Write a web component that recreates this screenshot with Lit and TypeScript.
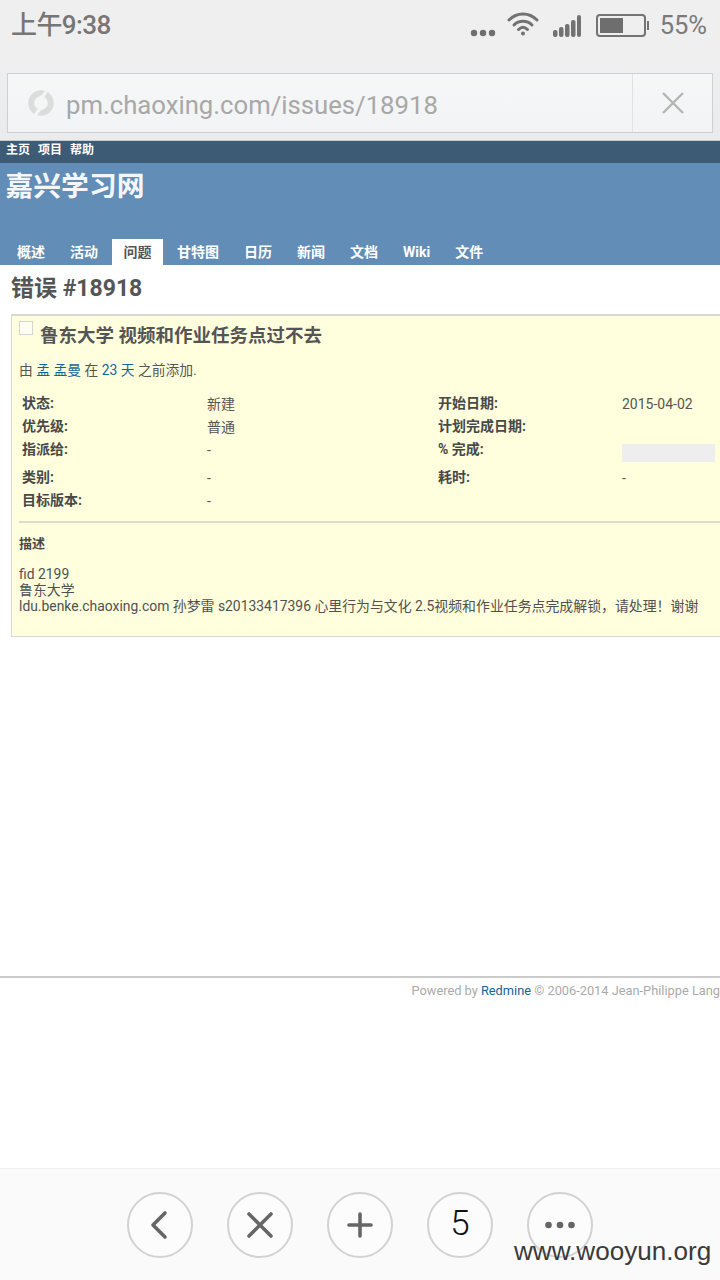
import { LitElement, html, css } from "lit";
import { customElement } from "lit/decorators.js";

@customElement("app-root")
export class AppRoot extends LitElement {
  static styles = css`
    :host { display: block; width: 720px; height: 1280px; overflow: hidden; position: relative; background: #fff;
      font-family: Roboto, "Noto Sans CJK SC", sans-serif; color: #484848; }
    a { color: #169; text-decoration: none; }
    .page { display: flex; flex-direction: column; height: 1280px; }
    .chrome { height: 140px; background: linear-gradient(#efefef 40%, #e9ebed); display: flex; flex-direction: column; box-sizing: border-box; flex: none; }
    .status { height: 50px; display: flex; align-items: center; padding: 0 13px 0 12px; color: #737373; flex: none; }
    .time { font-size: 26px; font-weight: 500; letter-spacing: -0.6px; color: #767676; margin: -6px 0 0 -1px; }
    .status-right { margin-left: auto; display: flex; align-items: center; }
    .pct { font-size: 25.500px; color: #7a7a7a; margin-left: 10px; }
    .urlbox { margin: 23px 7px 0; height: 60px; box-sizing: border-box; border: 1px solid #cdd0d4; display: flex; align-items: center; background: linear-gradient(#f6f7f7, #f2f3f4); }
    .url { font-size: 25.700px; color: #a8a8a8; margin: 3px 0 0 12px; }
    .logo { margin-left: 20px; display: block; }
    .close { margin-left: auto; width: 79px; height: 58px; border-left: 1px solid #e0e2e4; display: flex; align-items: center; justify-content: center; }
    .top { height: 23px; background: #3e5b76; border-top: 1px solid #c8cacc; box-sizing: border-box; display: flex; gap: 8px; padding: 0 6px; align-items: center; font-size: 12px; font-weight: 700; color: #fff; flex: none; }
    .top span { line-height: 16px; margin-top: -4px; }
    .header { height: 102px; background: #628db6; display: flex; flex-direction: column; flex: none; box-sizing: border-box; }
    .site { font-size: 27.800px; font-weight: 700; color: #f4f6f9; line-height: 36px; padding: 6px 0 0 5.500px; }
    .tabs { margin-top: auto; display: flex; padding-left: 4.500px; height: 26px; }
    .tab { font-size: 14px; font-weight: 700; color: #fff; padding: 0 12.500px 3px; display: flex; align-items: center; box-sizing: border-box; }
    .tab.on { background: #fff; color: #555; width: 51px; justify-content: center; margin: 0 1.500px; padding: 0 0 3px; }
    .tab.latin { padding-bottom: 0; }
    .main { flex: 1; display: flex; flex-direction: column; }
    h2 { margin: 0; font-size: 23px; font-weight: 700; color: #555; line-height: 30px; padding: 9px 0 0 11px; }
    .issue { margin: 10px 0 0 11px; width: 720px; height: 323px; box-sizing: border-box; background: #ffd; border: 1px solid #d7d7d7; border-top-width: 2px; padding: 5px 0 0 7px; }
    .title { display: flex; align-items: flex-start; }
    .check { width: 14px; height: 14px; border: 1px solid #d5d5d5; background: #fdfdf2; box-sizing: border-box; flex: none; }
    .title h3 { margin: 1px 0 0 7px; font-size: 18.500px; font-weight: 700; color: #555; line-height: 28px; }
    .author { font-size: 13.800px; color: #555; margin: 10px 0 0 0; line-height: 20px; }
    .attrs { display: grid; grid-template-columns: 185px 231px 184px 100px; grid-template-rows: 23px 23px 28px 23px 23px; margin: 13px 0 0 3px; font-size: 14px; }
    .attrs .l { font-weight: 700; color: #484848; line-height: 20px; }
    .attrs .v { color: #555; line-height: 22px; }
    .bar { width: 93px; height: 18px; background: #eee; margin-top: 5px; }
    hr { border: 0; border-top: 2px solid #dcdcc8; margin: 0; }
    .desc { margin-top: 8px; }
    .desc-h { font-size: 13px; font-weight: 700; color: #484848; margin-top: 12px; line-height: 18px; }
    .body { font-size: 13.900px; color: #505050; line-height: 16px; margin-top: 13px; white-space: nowrap; }
    .spacer { flex: 1; }
    .footer { border-top: 2px solid #ccc; height: 192px; box-sizing: border-box; flex: none; }
    .foot { text-align: right; font-size: 12.800px; color: #aaa; line-height: 26px; white-space: nowrap; }
    .bottom { height: 112px; box-sizing: border-box; background: #fafafa; border-top: 1px solid #eee; display: flex; gap: 34px; padding: 23px 0 0 127px; flex: none; }
    .circle { width: 66px; height: 66px; border-radius: 50%; border: 2px solid #d2d2d2; box-sizing: border-box; display: flex; align-items: center; justify-content: center; background: #fcfcfc; }
    .num { color: #111; font-size: 35px; font-weight: 300; margin-top: -4px; }
    .mark { position: absolute; left: 514px; top: 1235px; font-size: 26.100px; line-height: 32px; color: #3a3a3a; white-space: nowrap; font-family: "Liberation Sans", Arial, sans-serif; }
  `;

  render() {
    return html`<div class="page">
      <div class="chrome">
        <div class="status">
          <span class="time">上午9:38</span>
          <div class="status-right">
            <svg width="26" height="8" viewBox="0 0 26 8" style="margin-top:15px"><g fill="#6f6f6f"><circle cx="4" cy="4" r="3.200"/><circle cx="13" cy="4" r="3.200"/><circle cx="22" cy="4" r="3.200"/></g></svg>
            <svg width="32" height="24" viewBox="0 0 32 24" style="margin:-2px 0 0 11px" fill="none" stroke="#727272" stroke-width="3" stroke-linecap="round"><path d="M2 8C10 0 22 0 30 8"/><path d="M7 13c5-5 13-5 18 0"/><path d="M11.500 17.500c3-3 6-3 9 0"/><circle cx="16" cy="21.500" r="2" fill="#727272" stroke="none"/></svg>
            <svg width="28" height="22" viewBox="0 0 28 22" style="margin:1px 0 0 14px" fill="#727272"><rect x="0" y="15" width="4.500" height="7" rx="2"/><rect x="6" y="12" width="4.500" height="10" rx="2"/><rect x="12" y="9" width="4.500" height="13" rx="2"/><rect x="18" y="5" width="4.500" height="17" rx="2"/><rect x="24" y="0" width="4" height="22" rx="2"/></svg>
            <svg width="54" height="24" viewBox="0 0 54 24" style="margin:1px 0 0 15px"><rect x="1" y="1" width="48" height="21" rx="3" fill="none" stroke="#737373" stroke-width="2"/><rect x="4" y="4" width="23" height="15" fill="#6e6e6e"/><rect x="51" y="7" width="2" height="9" fill="#737373"/></svg>
            <span class="pct">55%</span>
          </div>
        </div>
        <div class="urlbox">
          <svg class="logo" width="26" height="26" viewBox="0 0 26 26"><circle cx="13" cy="13" r="9.800" fill="none" stroke="#dcdcdc" stroke-width="6"/><path d="M18.500 0.500C17.500 3.500 15.500 6 12.500 8M7.500 25.500C8.500 22.500 10.500 20 13.500 18" fill="none" stroke="#f5f6f6" stroke-width="3"/></svg>
          <span class="url">pm.chaoxing.com/issues/18918</span>
          <div class="close"><svg width="24" height="24" viewBox="0 0 24 24" stroke="#b4b4b4" stroke-width="2.400" fill="none"><path d="M2 2l20 20M22 2L2 22"/></svg></div>
        </div>
      </div>
      <div class="top"><span>主页</span><span>项目</span><span>帮助</span></div>
      <div class="header">
        <div class="site">嘉兴学习网</div>
        <div class="tabs">
          <div class="tab">概述</div><div class="tab">活动</div><div class="tab on">问题</div><div class="tab">甘特图</div><div class="tab">日历</div><div class="tab">新闻</div><div class="tab">文档</div><div class="tab latin">Wiki</div><div class="tab">文件</div>
        </div>
      </div>
      <div class="main">
        <h2>错误 #18918</h2>
        <div class="issue">
          <div class="title"><div class="check"></div><h3>鲁东大学 视频和作业任务点过不去</h3></div>
          <div class="author">由 <a>孟 孟曼</a> 在 <a>23 天</a> 之前添加.</div>
          <div class="attrs">
            <div class="l">状态:</div><div class="v">新建</div><div class="l">开始日期:</div><div class="v">2015-04-02</div>
            <div class="l">优先级:</div><div class="v">普通</div><div class="l">计划完成日期:</div><div class="v"></div>
            <div class="l">指派给:</div><div class="v">-</div><div class="l">% 完成:</div><div class="v"><div class="bar"></div></div>
            <div class="l">类别:</div><div class="v">-</div><div class="l">耗时:</div><div class="v">-</div>
            <div class="l">目标版本:</div><div class="v">-</div><div></div><div></div>
          </div>
          <hr class="desc" />
          <div class="desc-h">描述</div>
          <div class="body">fid 2199<br />鲁东大学<br />ldu.benke.chaoxing.com 孙梦雷 s20133417396 心里行为与文化 2.5视频和作业任务点完成解锁，请处理！谢谢</div>
        </div>
        <div class="spacer"></div>
        <div class="footer"><div class="foot">Powered by <a>Redmine</a> © 2006-2014 Jean-Philippe Lang</div></div>
      </div>
      <div class="bottom">
        <div class="circle"><svg width="24" height="30" viewBox="0 0 24 30" fill="none" stroke="#666" stroke-width="3.600" stroke-linecap="round" stroke-linejoin="round"><path d="M17 3L5 15l12 12"/></svg></div>
        <div class="circle"><svg width="30" height="30" viewBox="0 0 30 30" fill="none" stroke="#666" stroke-width="3.600" stroke-linecap="round"><path d="M4 4l22 22M26 4L4 26"/></svg></div>
        <div class="circle"><svg width="30" height="30" viewBox="0 0 30 30" fill="none" stroke="#666" stroke-width="3.600" stroke-linecap="round"><path d="M15 4v22M4 15h22"/></svg></div>
        <div class="circle"><span class="num">5</span></div>
        <div class="circle"><svg width="30" height="8" viewBox="0 0 30 8" fill="#666"><circle cx="3.500" cy="4" r="3.300"/><circle cx="15" cy="4" r="3.300"/><circle cx="26.500" cy="4" r="3.300"/></svg></div>
      </div>
    </div>
    <div class="mark">www.wooyun.org</div>`;
  }
}
